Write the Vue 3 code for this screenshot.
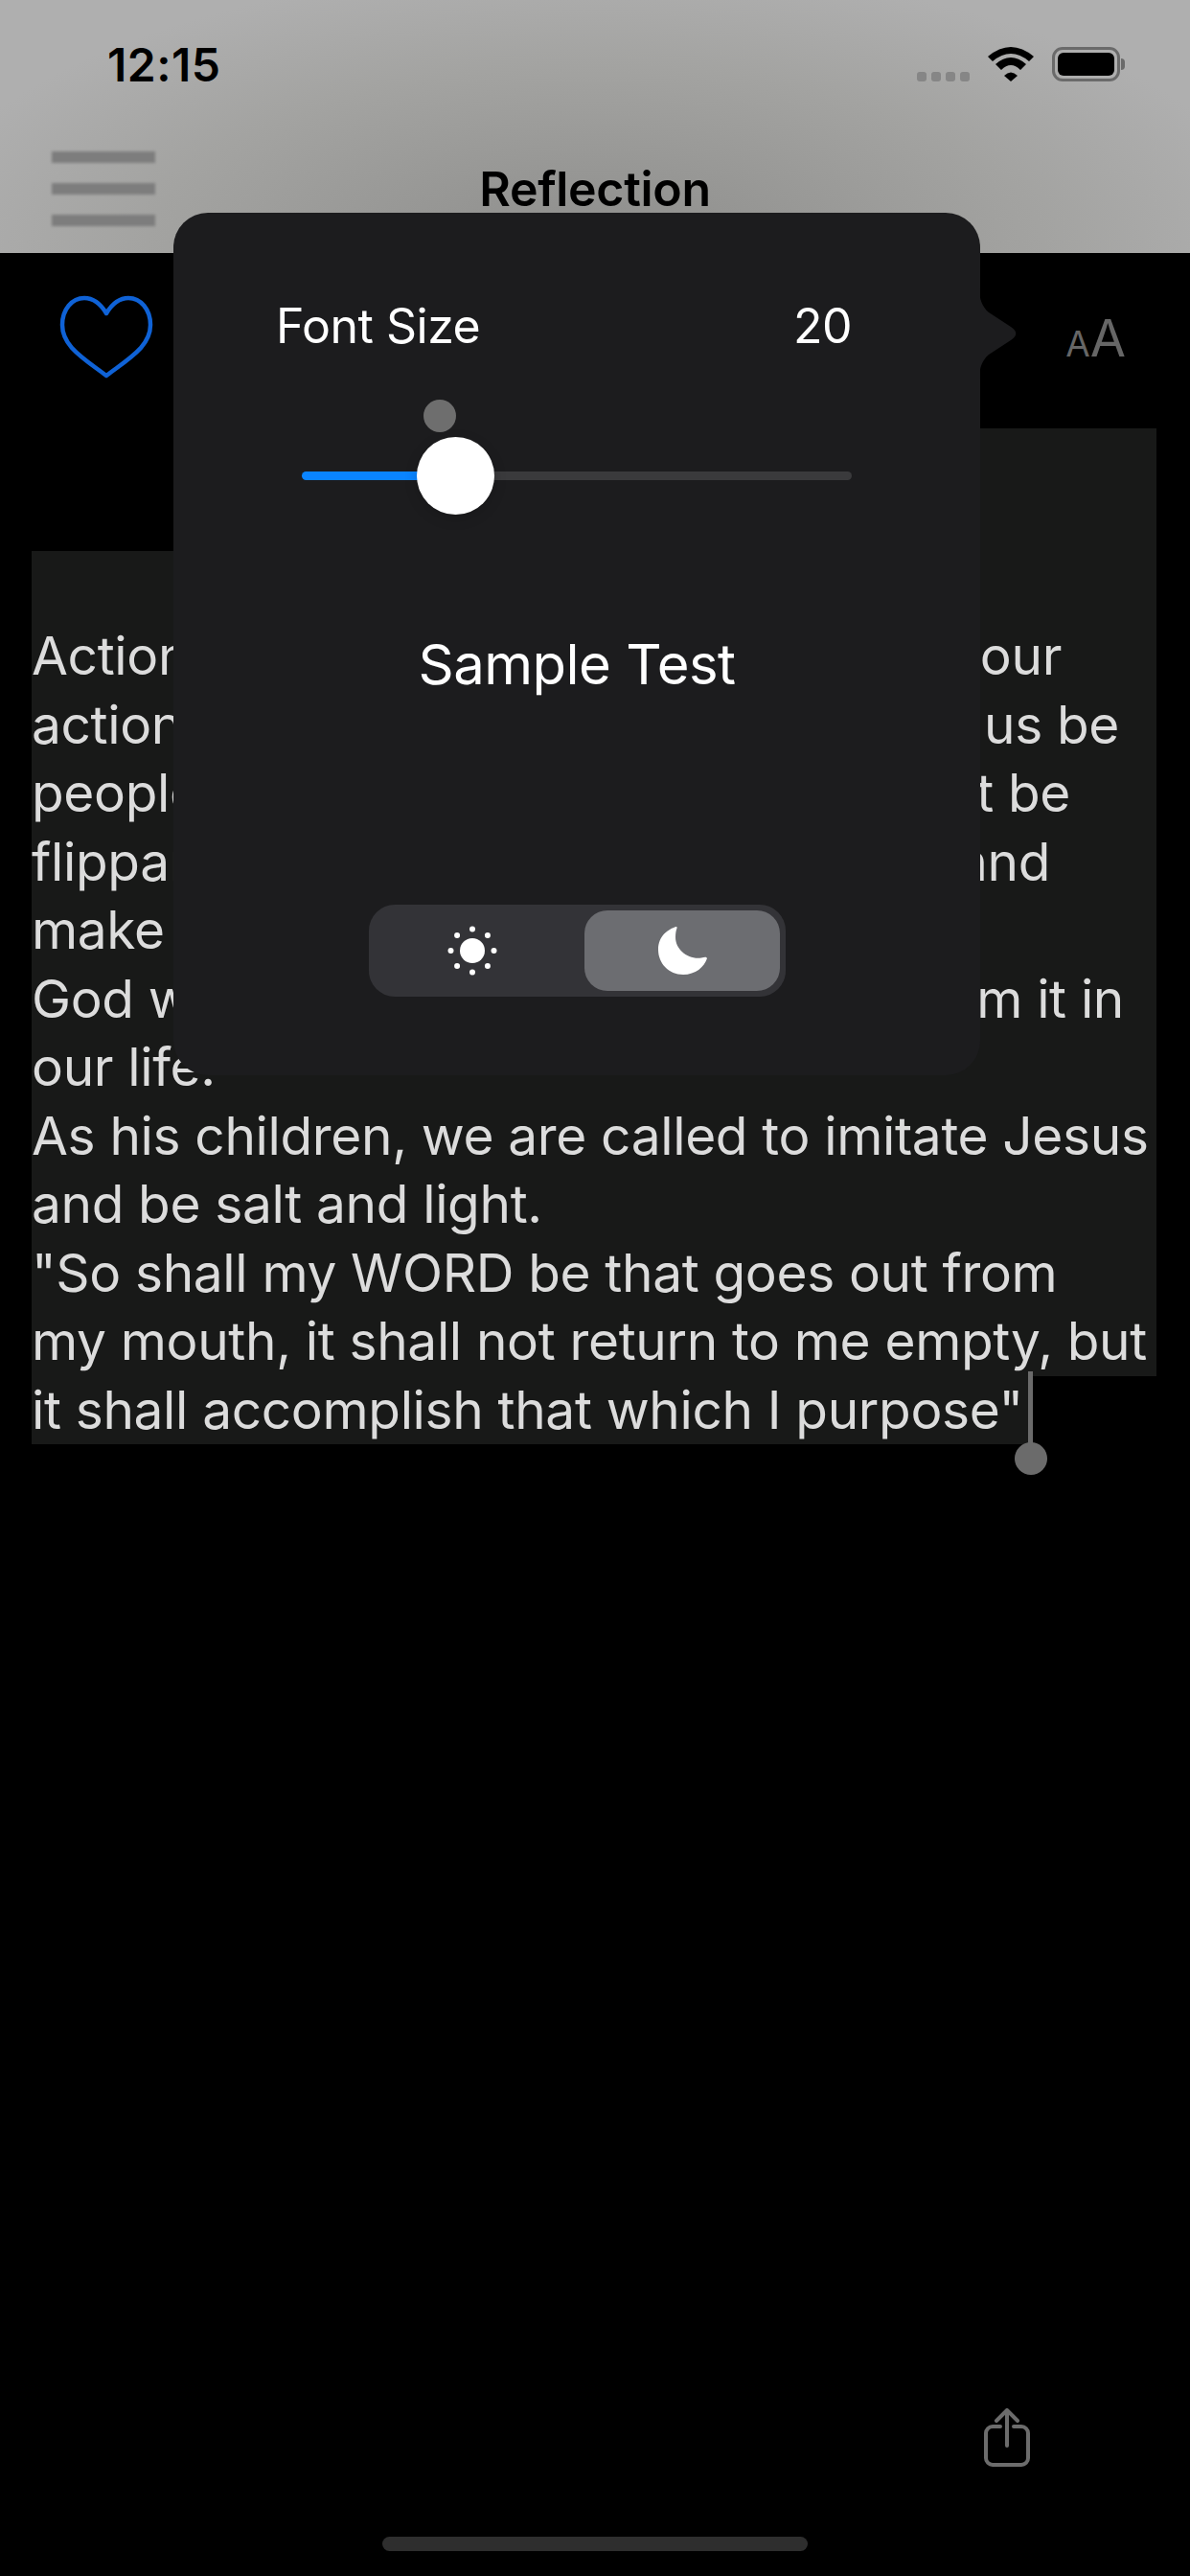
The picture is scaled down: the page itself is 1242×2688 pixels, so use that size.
<template>
  <div class="screen">
    <header class="top">
      <div class="status">
        <span class="time">12:15</span>
        <div class="status-icons">
          <div class="signal"><i></i><i></i><i></i><i></i></div>
          <svg class="wifi" width="48" height="36" viewBox="0 0 48 36">
            <path d="M0 10Q24 -10 48 10L43 15Q24 -1 5 15Z" fill="#000" />
            <path d="M8 18Q24 4 40 18L34 24Q24 14 14 24Z" fill="#000" />
            <path d="M17 30Q24 23 31 30L24 36Z" fill="#000" />
          </svg>
          <div class="battery"><div class="battery-fill"></div></div>
        </div>
      </div>
      <div class="nav">
        <div class="burger"><i></i><i></i><i></i></div>
        <span class="title">Reflection</span>
      </div>
    </header>

    <div class="toolbar">
      <svg width="100" height="88" viewBox="0 0 100 88">
        <path d="M50 84C37 74 24 66 14 55C7 47 4 40 4 31C4 15 14 3 27 3C36 3 44 9 50 19C56 9 64 3 73 3C86 3 96 15 96 31C96 40 93 47 86 55C76 66 63 74 50 84Z" fill="none" stroke="#0f62d6" stroke-width="4.500" stroke-linejoin="round" />
      </svg>
      <span class="aa"><small>A</small>A</span>
    </div>

    <div class="reading">
      <div class="sel-top"></div>
      <div class="line blank"></div>
      <div v-for="line in lines" :key="line.left" class="line" :class="{ last: line.last }">
        <div class="line-text" :style="{ width: line.width + 'px' }">
          <span>{{ line.left }}</span>
          <span v-if="line.right">{{ line.right }}</span>
        </div>
      </div>
      <div class="caret"></div>
    </div>

    <div class="bottom">
      <svg class="share" width="52" height="64" viewBox="0 0 52 64">
        <path d="M19 19H11A7 7 0 0 0 4 26V52A7 7 0 0 0 11 59H41A7 7 0 0 0 48 52V26A7 7 0 0 0 41 19H33" fill="none" stroke="#6c6c6c" stroke-width="4" stroke-linecap="round" />
        <path d="M26 39V3M15 13L26 2L37 13" fill="none" stroke="#6c6c6c" stroke-width="4" stroke-linecap="round" stroke-linejoin="round" />
      </svg>
      <div class="home"></div>
    </div>

    <div class="popover">
      <svg class="pointer" width="42" height="104" viewBox="0 0 42 104">
        <path d="M0 0V4C0 16 3 24 10 30L33 45C40 50 40 54 33 59L10 74C3 80 0 88 0 100V104Z" fill="#1c1c1e" />
      </svg>
      <div class="size-row">
        <span>Font Size</span>
        <span>20</span>
      </div>
      <div class="slider">
        <div class="track-on"></div>
        <div class="track-off"></div>
        <div class="thumb"></div>
        <div class="grab-dot"></div>
      </div>
      <div class="sample">Sample Test</div>
      <div class="segment">
        <div class="seg-item">
          <svg width="54" height="54" viewBox="0 0 54 54" fill="#fff">
            <circle cx="27" cy="27" r="13" />
            <circle v-for="d in sunDots" :key="d.x + '-' + d.y" :cx="d.x" :cy="d.y" r="3" />
          </svg>
        </div>
        <div class="seg-item active">
          <svg width="52" height="52" viewBox="0 0 52 52">
            <path d="M19.500 1C12 3.500 1 10 1 25C1 39 12 51 27 51C40 51 49 43 52 34C51 32 49 33 46 33.500C32 35.500 19 25 19 12C19 8 19.500 5 20.500 2.500C20.800 1.500 20.300 0.800 19.500 1Z" fill="#fff" />
          </svg>
        </div>
      </div>
    </div>
  </div>
</template>

<script setup>
const lines = [
  { left: 'Actions', right: 'our', width: 1075 },
  { left: 'actions', right: 'us be', width: 1135 },
  { left: 'people', right: 'not be', width: 1084 },
  { left: 'flippant', right: 'and', width: 1063 },
  { left: 'make' },
  { left: 'God will', right: 'from it in', width: 1140 },
  { left: 'our life.' },
  { left: 'As his children, we are called to imitate Jesus' },
  { left: 'and be salt and light.' },
  { left: '"So shall my WORD be that goes out from' },
  { left: 'my mouth, it shall not return to me empty, but' },
  { left: 'it shall accomplish that which I purpose"', last: true },
]

// eight little dots round the sun
const sunDots = Array.from({ length: 8 }, (_, i) => {
  const a = (i * Math.PI) / 4
  return { x: 27 + 22.5 * Math.cos(a), y: 27 + 22.5 * Math.sin(a) }
})
</script>

<style>
html,
body {
  background: #000;
}
</style>

<style scoped>
.screen {
  position: relative;
  width: 1242px;
  height: 2688px;
  overflow: hidden;
  background: #000;
  display: flex;
  flex-direction: column;
  font-family: Inter, "Liberation Sans", sans-serif;
}

.top {
  height: 264px;
  flex-shrink: 0;
  background: radial-gradient(ellipse 720px 300px at 50% 100%, #8d8d8b 0%, #a3a3a1 65%, #afafaf 100%);
  box-sizing: border-box;
  padding-top: 38px;
}

.status {
  display: flex;
  justify-content: space-between;
  align-items: center;
  padding: 0 73px 0 112px;
  height: 58px;
}

.time {
  font-size: 48px;
  font-weight: 600;
  color: #000;
  letter-spacing: 0.5px;
}

.status-icons {
  display: flex;
  align-items: center;
  gap: 19px;
}

.signal {
  display: flex;
  gap: 5px;
  margin-top: 26px;
}

.signal i {
  width: 10px;
  height: 10px;
  border-radius: 3px;
  background: #868686;
}

.battery {
  position: relative;
  width: 71px;
  height: 36px;
  box-sizing: border-box;
  border: 3px solid #6a6a6a;
  border-radius: 11px;
  padding: 3px;
}

.battery::after {
  content: "";
  position: absolute;
  right: -8px;
  top: 9px;
  width: 4px;
  height: 12px;
  background: #6a6a6a;
  border-radius: 0 6px 6px 0;
}

.battery-fill {
  height: 100%;
  background: #000;
  border-radius: 6px;
}

.nav {
  position: relative;
  height: 168px;
}

.burger {
  position: absolute;
  left: 54px;
  top: 62px;
  width: 108px;
  display: flex;
  flex-direction: column;
  gap: 21px;
  filter: blur(1.5px);
}

.burger i {
  height: 12px;
  background: #7d7d7d;
}

.title {
  position: absolute;
  left: 0;
  right: 0;
  top: 71px;
  text-align: center;
  font-size: 50px;
  font-weight: 600;
  color: #000;
  letter-spacing: -0.3px;
  line-height: 60px;
}

.toolbar {
  height: 183px;
  flex-shrink: 0;
  display: flex;
  justify-content: space-between;
  padding: 44px 69px 0 61px;
  box-sizing: border-box;
}

.aa {
  font-size: 54px;
  color: #666;
  line-height: 1;
  margin-top: 18px;
  letter-spacing: -2px;
}

.aa small {
  font-size: 37px;
  letter-spacing: 0;
}

.reading {
  position: relative;
  width: 1174px;
  margin-left: 33px;
  color: #dcdcdc;
  font-size: 55px;
  letter-spacing: -0.35px;
}

.sel-top {
  height: 128px;
  margin-left: 700px;
  background: #181918;
}

.line {
  height: 71.5px;
  line-height: 71.5px;
  background: #181918;
  white-space: nowrap;
}

.line.blank {
  height: 74px;
}

.line.last {
  width: 1042px;
}

.line-text {
  display: flex;
  justify-content: space-between;
}

.caret {
  position: absolute;
  right: 129px;
  bottom: 0;
  width: 5px;
  height: 76px;
  background: #6b6b6b;
}

.caret::after {
  content: "";
  position: absolute;
  left: -14px;
  bottom: -32px;
  width: 34px;
  height: 34px;
  border-radius: 50%;
  background: #6b6b6b;
}

.bottom {
  margin-top: auto;
  position: relative;
  height: 180px;
}

.share {
  position: absolute;
  left: 1025px;
  top: 5px;
}

.home {
  position: absolute;
  left: 399px;
  top: 139px;
  width: 444px;
  height: 15px;
  border-radius: 8px;
  background: #2e2e2e;
}

.popover {
  position: absolute;
  left: 181px;
  top: 222px;
  width: 842px;
  height: 900px;
  box-sizing: border-box;
  background: #1c1c1e;
  border-radius: 36px;
  color: #fff;
  padding: 88px 0 0;
  display: flex;
  flex-direction: column;
}

.pointer {
  position: absolute;
  left: 841px;
  top: 74px;
}

.size-row {
  display: flex;
  justify-content: space-between;
  padding: 0 134px 0 107px;
  font-size: 50px;
  line-height: 60px;
  letter-spacing: -0.5px;
}

.slider {
  position: relative;
  display: flex;
  align-items: center;
  margin: 122px 134px 0;
  height: 9px;
}

.track-on {
  width: 160px;
  height: 9px;
  background: #0a84ff;
  border-radius: 5px 0 0 5px;
}

.track-off {
  flex: 1;
  height: 9px;
  background: #3a3a3c;
  border-radius: 0 5px 5px 0;
}

.thumb {
  position: absolute;
  left: 120px;
  top: -36px;
  width: 81px;
  height: 81px;
  border-radius: 50%;
  background: #fff;
  box-shadow: 0 4px 14px rgba(0, 0, 0, 0.15);
}

.grab-dot {
  position: absolute;
  left: 127px;
  top: -75px;
  width: 34px;
  height: 34px;
  border-radius: 50%;
  background: #6e6e6e;
}

.sample {
  margin-top: 157px;
  text-align: center;
  font-size: 58px;
  line-height: 70px;
  letter-spacing: -0.5px;
}

.segment {
  display: flex;
  justify-content: space-between;
  align-self: center;
  margin-top: 216px;
  width: 435px;
  height: 96px;
  box-sizing: border-box;
  padding: 6px;
  background: #333337;
  border-radius: 27px;
}

.seg-item {
  width: 204px;
  border-radius: 24px;
  display: flex;
  align-items: center;
  justify-content: center;
}

.seg-item.active {
  background: #6c6d71;
}
</style>
